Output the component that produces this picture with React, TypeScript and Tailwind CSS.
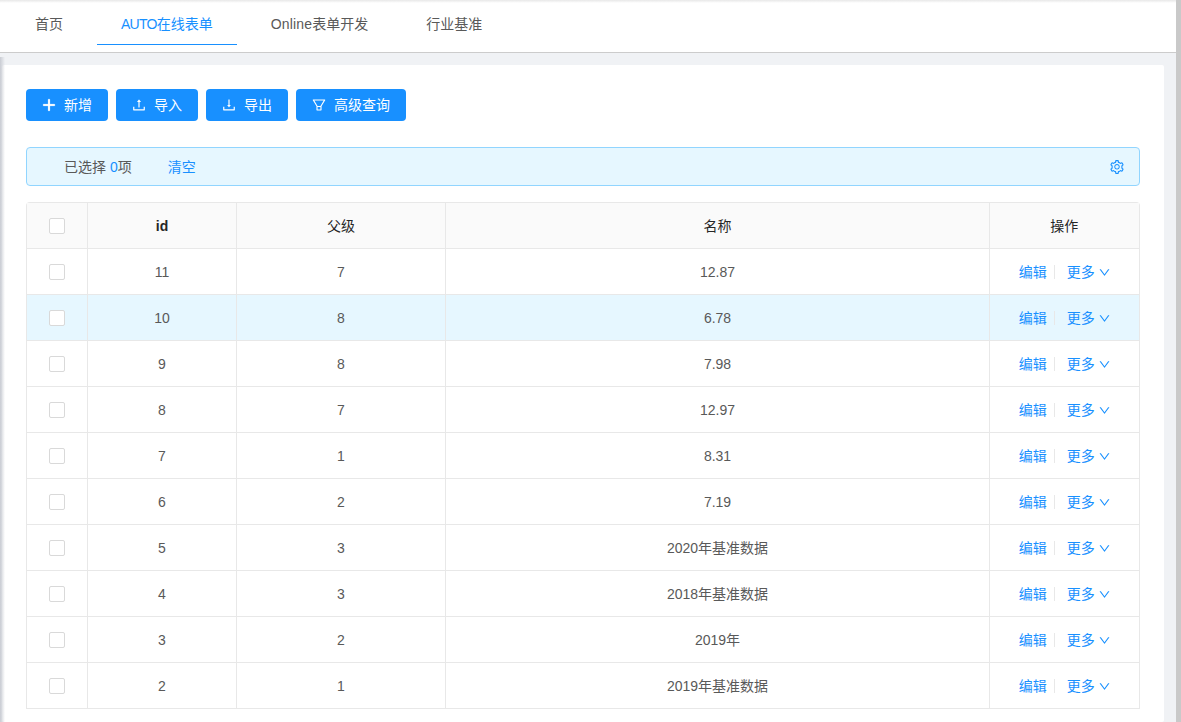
import { AiOutlinePlus, AiOutlineUpload, AiOutlineDownload, AiOutlineFilter, AiOutlineSetting, AiOutlineDown } from 'react-icons/ai';

const rows = [
  { id: 11, parent: 7, name: '12.87', active: false },
  { id: 10, parent: 8, name: '6.78', active: true },
  { id: 9, parent: 8, name: '7.98', active: false },
  { id: 8, parent: 7, name: '12.97', active: false },
  { id: 7, parent: 1, name: '8.31', active: false },
  { id: 6, parent: 2, name: '7.19', active: false },
  { id: 5, parent: 3, name: '2020年基准数据', active: false },
  { id: 4, parent: 3, name: '2018年基准数据', active: false },
  { id: 3, parent: 2, name: '2019年', active: false },
  { id: 2, parent: 1, name: '2019年基准数据', active: false },
];

const actions = [
  { label: '新增', icon: <AiOutlinePlus size={16} className="-mx-px stroke-[60]" /> },
  { label: '导入', icon: <AiOutlineUpload size={16} className="-mx-px" /> },
  { label: '导出', icon: <AiOutlineDownload size={16} className="-mx-px" /> },
  { label: '高级查询', icon: <AiOutlineFilter size={16} className="-mx-px" /> },
];

function Checkbox() {
  return <span className="block w-4 h-4 mx-auto bg-white border border-[#d9d9d9] rounded-[2px]"></span>;
}

export default function App() {
  return (
    <div className="h-[722px] w-[1181px] overflow-hidden flex text-sm text-[#595959] bg-[#f0f2f5] font-['Liberation_Sans','Noto_Sans_CJK_SC',sans-serif]">
      <div className="w-[1176px] flex flex-col">
        {/* Tabs */}
        <div className="h-[53px] shrink-0 bg-white border-b border-[#cccccc] pl-[11px] flex gap-[10px] relative">
          <div className="absolute left-0 right-0 top-0 h-[3px] bg-gradient-to-b from-[#e8e8e8] to-white"></div>
          <div className="h-[45px] px-6 pt-[14px] leading-5">首页</div>
          <div className="h-[45px] px-6 pt-[14px] leading-5 text-[#1890ff] border-b border-[#1890ff]">
            <span className="tracking-[-0.75px]">AUTO</span>在线表单
          </div>
          <div className="h-[45px] px-6 pt-[14px] leading-5">
            <span className="tracking-[0.2px]">Online</span>表单开发
          </div>
          <div className="h-[45px] px-6 pt-[14px] leading-5">行业基准</div>
        </div>

        {/* Content */}
        <div className="flex-1 min-h-0 pt-3 pr-3 pl-[2px] relative">
          <div className="h-full bg-white rounded-[2px] pt-6 pl-6 pr-6">
            <div className="flex gap-2">
              {actions.map((a) => (
                <button key={a.label} className="h-8 px-4 flex items-center gap-2 rounded bg-[#1890ff] text-white">
                  {a.icon}
                  <span>{a.label}</span>
                </button>
              ))}
            </div>

            <div className="mt-[26px] h-[39px] flex items-center justify-between pl-[37px] pr-[15px] bg-[#e6f7ff] border border-[#91d5ff] rounded">
              <div className="flex">
                <span>已选择 <span className="text-[#1890ff]">0</span>项</span>
                <span className="ml-[36px] text-[#1890ff]">清空</span>
              </div>
              <AiOutlineSetting size={16} className="text-[#1890ff] -mx-px" />
            </div>

            <div className="mt-4 border-t border-x border-[#e8e8e8] rounded-t">
              <table className="w-full table-fixed border-collapse text-center">
                <colgroup>
                  <col className="w-[60px]" />
                  <col className="w-[149px]" />
                  <col className="w-[209px]" />
                  <col />
                  <col className="w-[150px]" />
                </colgroup>
                <thead className="bg-[#fafafa] text-[#262626]">
                  <tr className="h-[45px] border-b border-[#e8e8e8]">
                    <th className="pt-[2px] border-r border-[#e8e8e8] font-normal"><Checkbox /></th>
                    <th className="pt-[2px] pl-px border-r border-[#e8e8e8] font-bold">id</th>
                    <th className="pt-[2px] pl-px border-r border-[#e8e8e8] font-normal">父级</th>
                    <th className="pt-[2px] pl-px border-r border-[#e8e8e8] font-normal">名称</th>
                    <th className="pt-[2px] font-normal">操作</th>
                  </tr>
                </thead>
                <tbody>
                  {rows.map((r) => (
                    <tr key={r.id} className={`h-[46px] border-b border-[#e8e8e8] ${r.active ? 'bg-[#e6f7ff]' : ''}`}>
                      <td className="pt-[2px] border-r border-[#e8e8e8]"><Checkbox /></td>
                      <td className="pt-[2px] pl-px border-r border-[#e8e8e8]">{r.id}</td>
                      <td className="pt-[2px] pl-px border-r border-[#e8e8e8]">{r.parent}</td>
                      <td className="pt-[2px] pl-px border-r border-[#e8e8e8]">{r.name}</td>
                      <td className="pt-[2px]">
                        <div className="flex items-center justify-center text-[#1890ff]">
                          <span>编辑</span>
                          <span className="w-px h-[14px] bg-[#e8e8e8] ml-[7px] mr-3"></span>
                          <span>更多</span>
                          <AiOutlineDown size={13} className="ml-[3px] -mr-[1px]" />
                        </div>
                      </td>
                    </tr>
                  ))}
                </tbody>
              </table>
            </div>
          </div>
          {/* Sidebar shadow along the left edge */}
          <div className="absolute left-0 top-[4px] bottom-0 w-[5px] bg-gradient-to-r from-[#c9ccd3] to-transparent"></div>
        </div>
      </div>
      {/* Scrollbar strip */}
      <div className="w-[5px] bg-[#c9c9c9]"></div>
    </div>
  );
}
